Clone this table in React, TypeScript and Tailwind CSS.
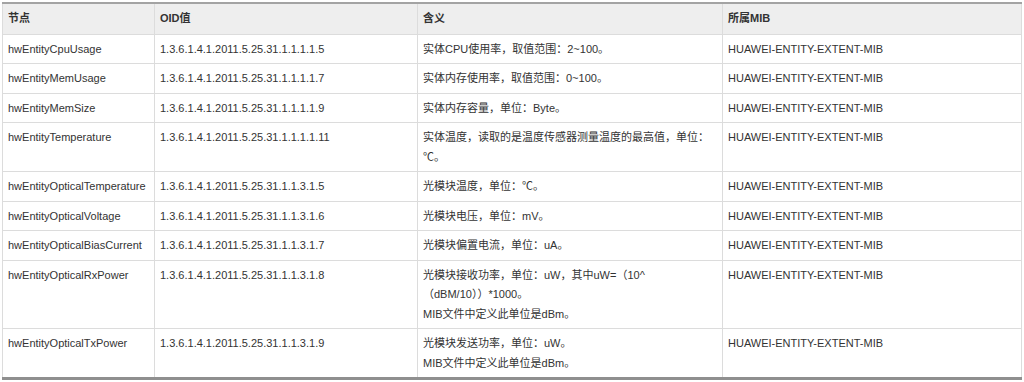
import React from "react";

interface Row {
  node: string;
  oid: string;
  meaning: string[];
  mib: string;
}

const MIB = "HUAWEI-ENTITY-EXTENT-MIB";

const rows: Row[] = [
  { node: "hwEntityCpuUsage", oid: "1.3.6.1.4.1.2011.5.25.31.1.1.1.1.5", meaning: ["实体CPU使用率，取值范围：2~100。"], mib: MIB },
  { node: "hwEntityMemUsage", oid: "1.3.6.1.4.1.2011.5.25.31.1.1.1.1.7", meaning: ["实体内存使用率，取值范围：0~100。"], mib: MIB },
  { node: "hwEntityMemSize", oid: "1.3.6.1.4.1.2011.5.25.31.1.1.1.1.9", meaning: ["实体内存容量，单位：Byte。"], mib: MIB },
  {
    node: "hwEntityTemperature",
    oid: "1.3.6.1.4.1.2011.5.25.31.1.1.1.1.11",
    meaning: ["实体温度，读取的是温度传感器测量温度的最高值，单位：", "℃。"],
    mib: MIB,
  },
  { node: "hwEntityOpticalTemperature", oid: "1.3.6.1.4.1.2011.5.25.31.1.1.3.1.5", meaning: ["光模块温度，单位：℃。"], mib: MIB },
  { node: "hwEntityOpticalVoltage", oid: "1.3.6.1.4.1.2011.5.25.31.1.1.3.1.6", meaning: ["光模块电压，单位：mV。"], mib: MIB },
  { node: "hwEntityOpticalBiasCurrent", oid: "1.3.6.1.4.1.2011.5.25.31.1.1.3.1.7", meaning: ["光模块偏置电流，单位：uA。"], mib: MIB },
  {
    node: "hwEntityOpticalRxPower",
    oid: "1.3.6.1.4.1.2011.5.25.31.1.1.3.1.8",
    meaning: ["光模块接收功率，单位：uW，其中uW=（10^", "（dBM/10））*1000。", "MIB文件中定义此单位是dBm。"],
    mib: MIB,
  },
  {
    node: "hwEntityOpticalTxPower",
    oid: "1.3.6.1.4.1.2011.5.25.31.1.1.3.1.9",
    meaning: ["光模块发送功率，单位：uW。", "MIB文件中定义此单位是dBm。"],
    mib: MIB,
  },
];

const cell = "border border-[#dcdcdc] px-[5px] pt-[5px] pb-[4px] align-top";
const head = "border border-[#dcdcdc] border-t-2 border-t-[#a3a3a3] px-[5px] pt-[5px] pb-[5px] align-top";
const last = " border-b-[3px] border-b-[#8f8f8f]";

export default function App() {
  return (
    <div
      className="h-[382px] w-[1024px] bg-white pl-[2px] pr-[2px] pt-[2px] text-[11px] leading-[19.5px] text-[#333333]"
      style={{ fontFamily: '"Liberation Sans", "Noto Sans CJK SC", sans-serif' }}
    >
      <table className="w-[1019px] table-fixed border-collapse">
        <colgroup>
          <col className="w-[152px]" />
          <col className="w-[263px]" />
          <col className="w-[305px]" />
          <col className="w-[299px]" />
        </colgroup>
        <thead>
          <tr className="bg-[#eeeeee] text-left font-bold">
            <th className={head}>节点</th>
            <th className={head}>OID值</th>
            <th className={head}>含义</th>
            <th className={head}>所属MIB</th>
          </tr>
        </thead>
        <tbody>
          {rows.map((r, i) => {
            const cls = cell + (i === rows.length - 1 ? last : "");
            return (
              <tr key={r.node}>
                <td className={cls}>{r.node}</td>
                <td className={cls}>{r.oid}</td>
                <td className={cls}>
                  {r.meaning.map((m) => (
                    <div key={m} className="whitespace-nowrap">
                      {m}
                    </div>
                  ))}
                </td>
                <td className={cls}>{r.mib}</td>
              </tr>
            );
          })}
        </tbody>
      </table>
    </div>
  );
}
